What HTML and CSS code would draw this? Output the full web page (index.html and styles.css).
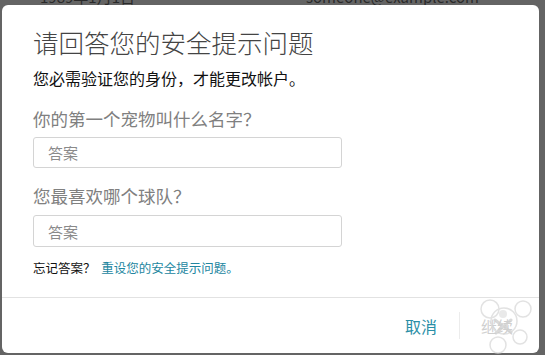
FILE: index.html
```html
<!DOCTYPE html>
<html lang="zh-CN">
<head>
  <meta charset="UTF-8">
  <title>安全提示问题</title>
  <link rel="stylesheet" href="styles.css">
</head>
<body>
  <div class="backdrop">
    <div class="behind">
      <span>1989年1月1日</span>
      <span>someone@example.com</span>
    </div>
    <div class="dialog">
      <div class="dialog-body">
        <h1 class="title">请回答您的安全提示问题</h1>
        <p class="subtitle">您必需验证您的身份，才能更改帐户。</p>

        <label class="question" for="answer-1">你的第一个宠物叫什么名字？</label>
        <input class="answer" id="answer-1" type="text" placeholder="答案">

        <label class="question q2" for="answer-2">您最喜欢哪个球队？</label>
        <input class="answer a2" id="answer-2" type="text" placeholder="答案">

        <p class="forgot">忘记答案？ <a href="#">重设您的安全提示问题。</a></p>
      </div>
      <div class="dialog-footer">
        <button class="btn btn-cancel">取消</button>
        <span class="sep"></span>
        <button class="btn btn-next" disabled>继续</button>
      </div>
    </div>
  </div>

  <!-- watermark stamp sitting over the corner of the screenshot -->
  <svg class="stamp" width="70" height="70" viewBox="0 0 70 70" fill="none" stroke="#dcdcdc" stroke-width="1.5">
    <circle cx="20" cy="22" r="9"/>
    <circle cx="53" cy="22" r="8"/>
    <circle cx="34" cy="34" r="13"/>
    <circle cx="28" cy="58" r="8"/>
    <circle cx="50" cy="50" r="7"/>
    <circle cx="33" cy="27" r="4" fill="#e4e4e4" stroke="none"/>
    <path d="M25 33 L41 45 M41 33 L26 46" stroke="#d0d0d0" stroke-width="3" stroke-linecap="round"/>
  </svg>
</body>
</html>
```

FILE: styles.css
```css
html, body {
  margin: 0;
  padding: 0;
  height: 100%;
  background: #646464;
  font-family: "Noto Sans CJK SC", "Noto Sans", sans-serif;
  color: #222;
  overflow: hidden;
}
body {
  position: relative;
}
.backdrop {
  display: flex;
  flex-direction: column;
  padding: 0 6px 0 2px;
}
.behind {
  height: 5px;
  overflow: hidden;
  display: flex;
  justify-content: space-between;
  padding: 0 60px 0 38px;
  font-size: 15px;
  color: #2a2a2a;
}
.behind span {
  margin-top: -13px;
  line-height: 20px;
}
.dialog {
  background: #fff;
  border-radius: 6px;
  height: 348px;
  display: flex;
  flex-direction: column;
}
.dialog-body {
  display: flex;
  flex-direction: column;
  align-items: flex-start;
  padding: 22px 30px 0 31px;
  border-bottom: 1px solid #e2e2e2;
  height: 293px;
  box-sizing: border-box;
}
.title {
  margin: 0;
  font-size: 25.5px;
  line-height: 30px;
  font-weight: 300;
  color: #444;
}
.subtitle {
  margin: 11px 0 0;
  font-size: 16px;
  line-height: 20px;
  color: #111;
}
.question {
  margin-top: 20px;
  font-size: 17.5px;
  line-height: 22px;
  color: #808080;
}
.q2 {
  margin-top: 17px;
}
.answer {
  margin-top: 7px;
  width: 309px;
  height: 31px;
  box-sizing: border-box;
  border: 1px solid #d4d4d4;
  border-radius: 3px;
  padding: 0 14px;
  font-family: inherit;
  font-size: 15px;
  color: #333;
  outline: none;
}
.a2 {
  margin-top: 8px;
  height: 32px;
}
.answer::placeholder {
  color: #8a8a8a;
}
.forgot {
  margin: 13px 0 0;
  font-size: 12.5px;
  line-height: 16px;
  color: #111;
}
.forgot a {
  color: #2286a0;
  text-decoration: none;
  margin-left: 3px;
}
.dialog-footer {
  display: flex;
  justify-content: flex-end;
  align-items: center;
  padding: 14px 26px 0 0;
}
.btn {
  border: none;
  background: transparent;
  padding: 0;
  font-family: inherit;
  font-size: 16px;
  line-height: 24px;
  cursor: pointer;
}
.btn-cancel {
  color: #2a8ea6;
}
.btn-next {
  color: #cfcfcf;
  cursor: default;
}
.sep {
  width: 1px;
  height: 27px;
  background: #ececec;
  margin: 0 21px 0 22px;
}
.stamp {
  position: absolute;
  left: 470px;
  top: 287px;
  opacity: 0.8;
}
```
